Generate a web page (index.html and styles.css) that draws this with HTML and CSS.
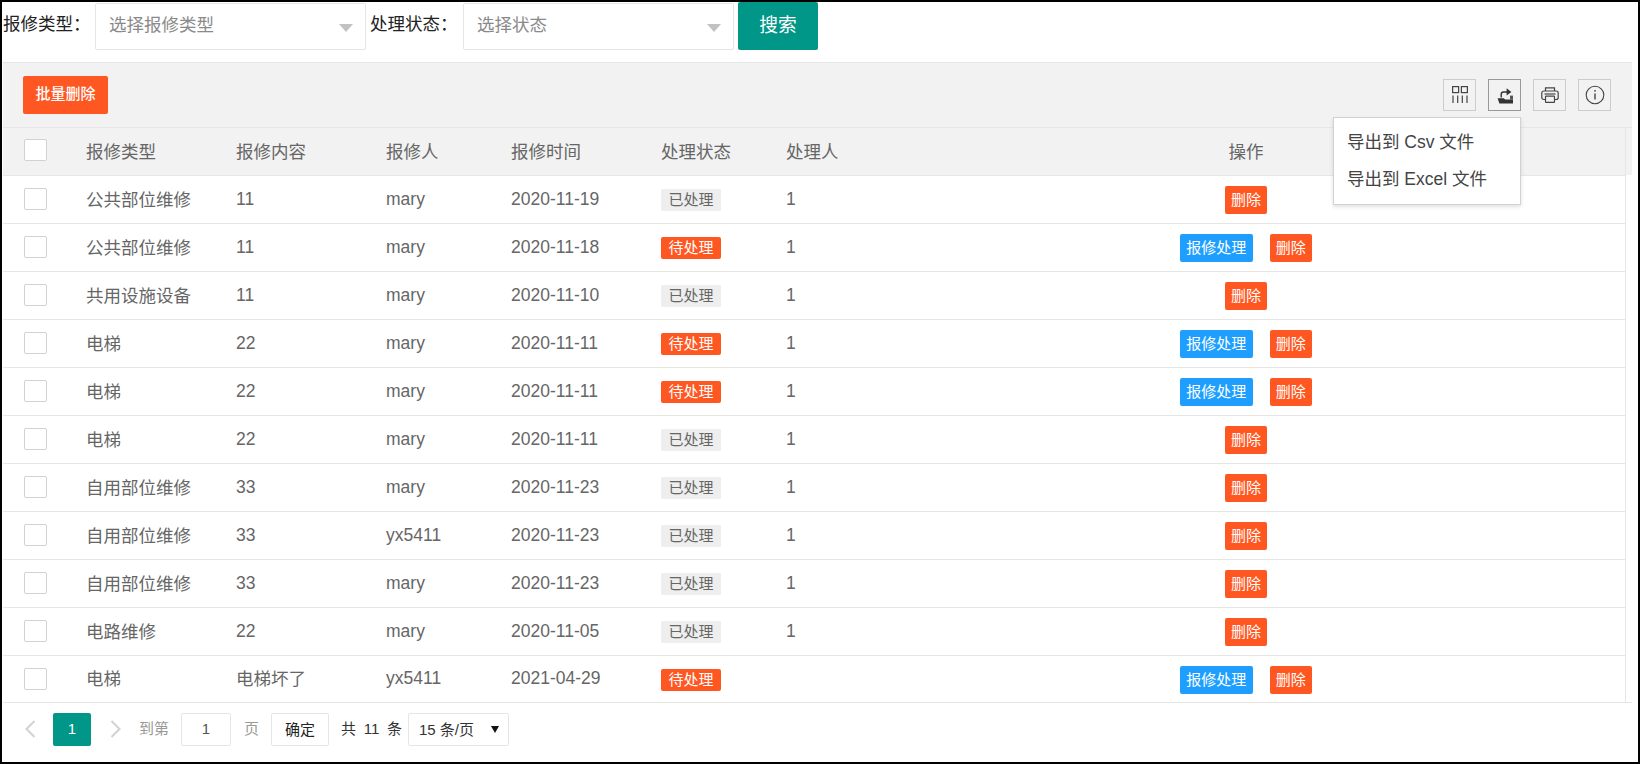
FILE: index.html
```html
<!DOCTYPE html>
<html lang="zh-CN">
<head>
<meta charset="utf-8">
<title>报修管理</title>
<link rel="stylesheet" href="styles.css">
</head>
<body>
<div class="frame">
  <form class="filters">
    <label class="filter-label">报修类型：</label>
    <div class="picker picker-first"><span>选择报修类型</span><i class="caret"></i></div>
    <label class="filter-label filter-label-second">处理状态：</label>
    <div class="picker picker-second"><span>选择状态</span><i class="caret"></i></div>
    <button type="button" class="search">搜索</button>
  </form>

  <section class="panel">
    <div class="toolbar">
      <button type="button" class="btn btn-orange btn-batch">批量删除</button>
      <div class="tools">
        <span class="tool">
          <svg viewBox="0 0 20 20" width="20" height="20" fill="none" stroke="#444" stroke-width="1.2"><rect x="2.6" y="1.6" width="6" height="6"/><rect x="11.4" y="1.6" width="6" height="6"/><path d="M3 10.5V18M7.7 10.5V18M12.3 10.5V18M17 10.5V18"/></svg>
        </span>
        <span class="tool tool-active">
          <svg viewBox="0 0 20 20" width="20" height="20"><path d="M2.6 13.2h6.2l1.4 1.4h7.8v4H4.4z" fill="#333"/><path d="M6.2 12.6V9.4c0-1.4 1-2.4 2.4-2.4h3.4" fill="none" stroke="#333" stroke-width="1.4"/><path d="M11.6 3.2 16.4 7l-4.8 3.6z" fill="#333"/><path d="M15 10.6h3v4h-3z" fill="#555"/></svg>
        </span>
        <span class="tool">
          <svg viewBox="0 0 20 20" width="20" height="20" fill="none" stroke="#444" stroke-width="1.2"><path d="M5.5 6V2.8h9V6"/><rect x="1.8" y="6" width="16.4" height="8.5" rx="2"/><rect x="5.5" y="11.2" width="9" height="6.2" rx=".6" fill="#f2f2f2"/><path d="M4.5 9h11"/></svg>
        </span>
        <span class="tool">
          <svg viewBox="0 0 20 20" width="20" height="20" fill="none" stroke="#444" stroke-width="1.1"><circle cx="10" cy="10" r="8.8"/><path d="M10 8.6v6" stroke-width="1.4"/><circle cx="10" cy="5.8" r=".9" fill="#444" stroke="none"/></svg>
        </span>
      </div>
      <ul class="menu">
        <li>导出到 Csv 文件</li>
        <li>导出到 Excel 文件</li>
      </ul>
    </div>

    <div class="grid-wrap">
      <table class="grid">
        <colgroup>
          <col class="c-check"><col class="c-type"><col class="c-content"><col class="c-user"><col class="c-time"><col class="c-state"><col class="c-handler"><col>
        </colgroup>
        <thead>
          <tr>
            <th><span class="check"></span></th><th>报修类型</th><th>报修内容</th><th>报修人</th><th>报修时间</th><th>处理状态</th><th>处理人</th><th class="center">操作</th>
          </tr>
        </thead>
        <tbody>
          <tr><td><span class="check"></span></td><td>公共部位维修</td><td>11</td><td>mary</td><td>2020-11-19</td><td><span class="tag">已处理</span></td><td>1</td><td class="center"><span class="btn btn-orange">删除</span></td></tr>
          <tr><td><span class="check"></span></td><td>公共部位维修</td><td>11</td><td>mary</td><td>2020-11-18</td><td><span class="tag tag-todo">待处理</span></td><td>1</td><td class="center"><span class="btn btn-blue">报修处理</span><span class="btn btn-orange">删除</span></td></tr>
          <tr><td><span class="check"></span></td><td>共用设施设备</td><td>11</td><td>mary</td><td>2020-11-10</td><td><span class="tag">已处理</span></td><td>1</td><td class="center"><span class="btn btn-orange">删除</span></td></tr>
          <tr><td><span class="check"></span></td><td>电梯</td><td>22</td><td>mary</td><td>2020-11-11</td><td><span class="tag tag-todo">待处理</span></td><td>1</td><td class="center"><span class="btn btn-blue">报修处理</span><span class="btn btn-orange">删除</span></td></tr>
          <tr><td><span class="check"></span></td><td>电梯</td><td>22</td><td>mary</td><td>2020-11-11</td><td><span class="tag tag-todo">待处理</span></td><td>1</td><td class="center"><span class="btn btn-blue">报修处理</span><span class="btn btn-orange">删除</span></td></tr>
          <tr><td><span class="check"></span></td><td>电梯</td><td>22</td><td>mary</td><td>2020-11-11</td><td><span class="tag">已处理</span></td><td>1</td><td class="center"><span class="btn btn-orange">删除</span></td></tr>
          <tr><td><span class="check"></span></td><td>自用部位维修</td><td>33</td><td>mary</td><td>2020-11-23</td><td><span class="tag">已处理</span></td><td>1</td><td class="center"><span class="btn btn-orange">删除</span></td></tr>
          <tr><td><span class="check"></span></td><td>自用部位维修</td><td>33</td><td>yx5411</td><td>2020-11-23</td><td><span class="tag">已处理</span></td><td>1</td><td class="center"><span class="btn btn-orange">删除</span></td></tr>
          <tr><td><span class="check"></span></td><td>自用部位维修</td><td>33</td><td>mary</td><td>2020-11-23</td><td><span class="tag">已处理</span></td><td>1</td><td class="center"><span class="btn btn-orange">删除</span></td></tr>
          <tr><td><span class="check"></span></td><td>电路维修</td><td>22</td><td>mary</td><td>2020-11-05</td><td><span class="tag">已处理</span></td><td>1</td><td class="center"><span class="btn btn-orange">删除</span></td></tr>
          <tr class="row-last"><td><span class="check"></span></td><td>电梯</td><td>电梯坏了</td><td>yx5411</td><td>2021-04-29</td><td><span class="tag tag-todo">待处理</span></td><td></td><td class="center"><span class="btn btn-blue">报修处理</span><span class="btn btn-orange">删除</span></td></tr>
        </tbody>
      </table>
    </div>

    <div class="pager">
      <svg class="chev" viewBox="0 0 12 20" width="12" height="20" fill="none" stroke="#d2d2d2" stroke-width="2"><path d="M10.5 2 2.5 10l8 8"/></svg>
      <span class="page-current">1</span>
      <svg class="chev chev-next" viewBox="0 0 12 20" width="12" height="20" fill="none" stroke="#d2d2d2" stroke-width="2"><path d="M1.5 2l8 8-8 8"/></svg>
      <span class="pager-text">到第</span>
      <span class="page-input">1</span>
      <span class="pager-text pager-unit">页</span>
      <span class="page-go">确定</span>
      <span class="pager-total">共 11 条</span>
      <span class="page-size">15 条/页<i class="size-caret"></i></span>
    </div>
  </section>
</div>
</body>
</html>
```

FILE: styles.css
```css
* { box-sizing: border-box; }
html, body { margin: 0; padding: 0; background: #fff; }
body {
  width: 1640px;
  height: 764px;
  overflow: hidden;
  font-family: "Liberation Sans", "Noto Sans CJK SC", sans-serif;
  color: #666;
}
.frame {
  width: 1640px;
  height: 764px;
  border: 2px solid #000;
  padding: 0 6px 0 1px;
}

/* filters */
.filters {
  display: flex;
  align-items: flex-start;
  height: 60px;
}
.filter-label {
  font-size: 17.5px;
  line-height: 44px;
  color: #222;
  width: 92px;
  flex: none;
}
.filter-label-second { width: 93px; margin-left: 4px; }
.picker {
  flex: none;
  display: flex;
  align-items: center;
  justify-content: space-between;
  width: 271px;
  height: 47px;
  margin-top: 1px;
  padding: 0 12px 6px 13px;
  border: 1px solid #e6e6e6;
  border-radius: 2px;
  font-size: 17.5px;
  color: #8a8a8a;
  background: #fff;
}
.caret {
  width: 0;
  height: 0;
  border-left: 7.5px solid transparent;
  border-right: 7.5px solid transparent;
  border-top: 8px solid #c2c2c2;
  margin-top: 8px;
}
.search {
  flex: none;
  width: 80px;
  height: 48px;
  margin-left: 4px;
  padding: 0 0 5px;
  border: 0;
  border-radius: 2px;
  background: #009688;
  color: #fff;
  font: inherit;
  font-size: 18.75px;
}

/* panel */
.panel { width: 1629px; }
.toolbar {
  position: relative;
  display: flex;
  align-items: center;
  justify-content: space-between;
  height: 66px;
  padding: 0 21px 0 20px;
  background: #f2f2f2;
  border-top: 1px solid #e6e6e6;
  border-bottom: 1px solid #e6e6e6;
}
.btn {
  display: inline-block;
  height: 28px;
  line-height: 27px;
  padding: 0 6.25px;
  border: 0;
  border-radius: 2px;
  color: #fff;
  font-family: inherit;
  font-size: 15px;
  vertical-align: middle;
}
.grid .btn { margin-top: 2px; }
.btn-orange { background: #ff5722; }
.btn-blue { background: #1e9fff; margin-right: 17px; }
.btn-batch {
  height: 38px;
  line-height: 36px;
  width: 85px;
  padding: 0 0 2px;
  font-weight: 500;
}
.tools { display: flex; gap: 12px; }
.tool {
  display: flex;
  align-items: center;
  justify-content: center;
  width: 33px;
  height: 32px;
  border: 1px solid #ccc;
}
.tool-active { border-color: #999; }
.menu {
  position: absolute;
  top: 54px;
  left: 1330px;
  width: 188px;
  height: 88px;
  margin: 0;
  padding: 6px 0;
  list-style: none;
  background: #fff;
  border: 1px solid #d2d2d2;
  box-shadow: 0 2px 4px rgba(0, 0, 0, .12);
  z-index: 5;
}
.menu li {
  height: 37px;
  line-height: 37px;
  padding-left: 13px;
  font-size: 17.5px;
  color: #444;
  white-space: nowrap;
}

/* table */
.grid-wrap {
  background: linear-gradient(#f2f2f2, #f2f2f2) no-repeat 0 0 / 100% 47px;
  border-bottom: 1px solid #e6e6e6;
  height: 575px;
}
.grid {
  width: 1623px;
  table-layout: fixed;
  border-collapse: collapse;
  font-size: 17.5px;
}
.c-check { width: 68px; }
.c-type, .c-content, .c-time { width: 150px; }
.c-user, .c-state { width: 125px; }
.c-handler { width: 95px; }
.grid th, .grid td {
  height: 48px;
  padding: 0 0 0 15px;
  border-bottom: 1px solid #e6e6e6;
  text-align: left;
  font-weight: 400;
  white-space: nowrap;
}
.grid th {
  height: 47px;
  background: #f2f2f2;
  padding-bottom: 2px;
}
.grid td:nth-child(2), .row-last td:nth-child(3) { padding-bottom: 2px; }
.row-last td { height: 47px; }
.grid th:first-child, .grid td:first-child { padding-left: 21px; }
.grid th:last-child, .grid td:last-child { border-right: 1px solid #e6e6e6; }
.grid .center { text-align: center; padding: 0 0 0 1px; }
.grid th.center { padding-bottom: 2px; }
.check {
  display: block;
  width: 23px;
  height: 22px;
  border: 1px solid #d2d2d2;
  border-radius: 2px;
  background: #fff;
}
.tag {
  display: inline-block;
  height: 22px;
  line-height: 21px;
  margin-top: 2px;
  padding: 0 7.5px;
  border-radius: 2px;
  background: #eee;
  color: #666;
  font-size: 15px;
  vertical-align: middle;
}
.tag-todo { background: #ff5722; color: #fff; }

/* pager */
.pager {
  display: flex;
  align-items: center;
  height: 50px;
  padding: 2px 0 0 21px;
  font-size: 15px;
}
.chev { flex: none; }
.page-current {
  width: 38px;
  height: 33px;
  line-height: 31px;
  margin-left: 17px;
  text-align: center;
  background: #009688;
  color: #fff;
  border-radius: 2px;
}
.chev-next { margin-left: 19px; }
.pager-text { margin-left: 17px; margin-bottom: 3px; color: #999; }
.page-input {
  width: 50px;
  height: 33px;
  line-height: 29px;
  margin-left: 12px;
  text-align: center;
  border: 1px solid #e6e6e6;
  border-radius: 2px;
  color: #555;
}
.pager-unit { margin-left: 13px; }
.page-go {
  width: 58px;
  height: 33px;
  line-height: 31px;
  margin-left: 12px;
  text-align: center;
  border: 1px solid #e6e6e6;
  border-radius: 2px;
  color: #222;
}
.pager-total {
  margin-left: 12px;
  margin-bottom: 3px;
  color: #333;
  word-spacing: 3.5px;
  white-space: nowrap;
}
.page-size {
  position: relative;
  width: 101px;
  height: 33px;
  line-height: 31px;
  margin-left: 6px;
  padding-left: 10px;
  border: 1px solid #e6e6e6;
  border-radius: 2px;
  color: #333;
  white-space: nowrap;
}
.size-caret {
  position: absolute;
  right: 9px;
  top: 12px;
  width: 0;
  height: 0;
  border-left: 4px solid transparent;
  border-right: 4px solid transparent;
  border-top: 7px solid #111;
}
```
